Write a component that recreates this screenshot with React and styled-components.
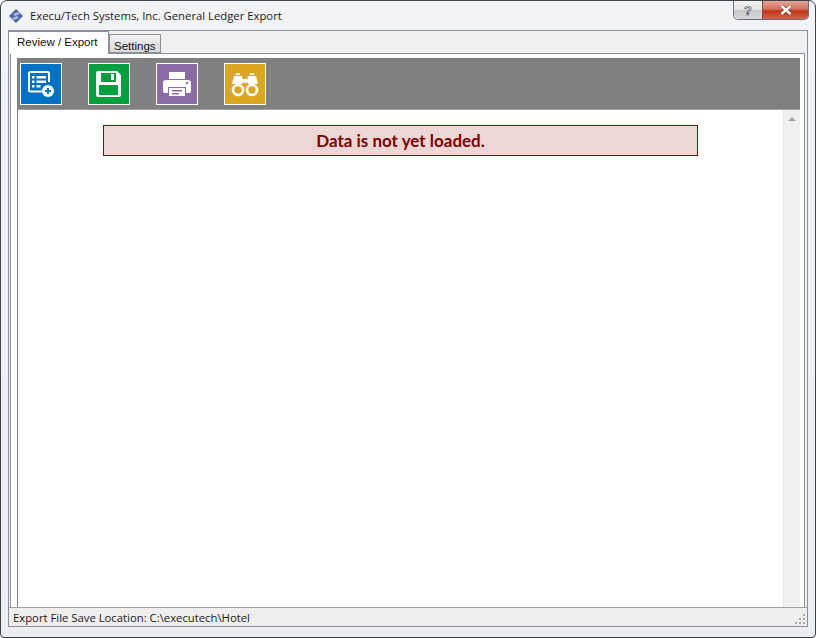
import React from 'react'
import styled, { createGlobalStyle } from 'styled-components'

const Global = createGlobalStyle`
  html, body { margin: 0; padding: 0; background: #fff; }
  * { box-sizing: border-box; }
`

const Window = styled.div`
  width: 816px;
  height: 638px;
  display: flex;
  flex-direction: column;
  padding: 0 7px 10px 7px;
  background: linear-gradient(#f1f3f5, #eceef1);
  border: 1px solid #3f4246;
  border-radius: 7px 7px 4px 4px;
  font-family: "Liberation Sans", Arial, sans-serif;
  color: #111;
`

const TitleBar = styled.div`
  height: 29px;
  flex: none;
  display: flex;
  align-items: flex-start;
`

const AppIcon = styled.svg`
  width: 16px;
  height: 16px;
  margin-top: 7px;
  flex: none;
`

const Title = styled.div`
  margin: 7px 0 0 6px;
  font-family: "Open Sans", sans-serif;
  font-size: 11.3px;
  line-height: 16px;
  color: #1a1a1a;
  white-space: nowrap;
`

const Controls = styled.div`
  margin-left: auto;
  margin-right: -1px;
  display: flex;
  height: 19px;
  width: 76px;
  border: 1px solid #6b7078;
  border-top: none;
  border-radius: 0 0 5px 5px;
  overflow: hidden;
`

const HelpButton = styled.div`
  width: 28px;
  background: linear-gradient(#f2f2f2 0, #e6e6e6 48%, #c8c8c8 52%, #d8d8d8 100%);
  display: flex;
  align-items: center;
  justify-content: center;
  font: bold 13px "Liberation Sans", sans-serif;
  color: #fff;
  -webkit-text-stroke: 0.7px #4a5060;
`

const CloseButton = styled.div`
  flex: 1;
  border-left: 1px solid #8c4638;
  background: linear-gradient(#e6a493 0, #d5705a 45%, #c0341c 55%, #d2654c 100%);
  display: flex;
  align-items: center;
  justify-content: center;
`

const Client = styled.div`
  flex: 1;
  min-height: 0;
  display: flex;
  flex-direction: column;
  background: #f0f0f0;
  border: 1px solid #8b909a;
`

const TabStrip = styled.div`
  height: 22px;
  flex: none;
  display: flex;
  align-items: flex-end;
  position: relative;
  z-index: 1;
`

const Tab = styled.div`
  height: ${p => (p.$active ? 23 : 19)}px;
  width: ${p => (p.$active ? 100 : 52)}px;
  margin-bottom: ${p => (p.$active ? -1 : 0)}px;
  padding: ${p => (p.$active ? '3px 0 0 8px' : '4px 0 0 4px')};
  font-size: 11.5px;
  line-height: 14px;
  background: ${p => (p.$active ? '#fff' : 'linear-gradient(#f2f2f2, #d9d9d9)')};
  border: 1px solid #8b909a;
  border-bottom: ${p => (p.$active ? 'none' : '1px solid #8b909a')};
  border-left: ${p => (p.$active ? 'none' : '1px solid #8b909a')};
  white-space: nowrap;
`

const TabPage = styled.div`
  flex: 1;
  min-height: 0;
  display: flex;
  flex-direction: column;
  margin: 0 2px 0 1px;
  padding: 4px 4px 0 6px;
  background: #fff;
  border: 1px solid #8b909a;
  border-bottom: none;
`

const Toolbar = styled.div`
  height: 51px;
  flex: none;
  display: flex;
  align-items: center;
  gap: 26px;
  padding-left: 3px;
  background: #808080;
`

const ToolButton = styled.div`
  width: 42px;
  height: 42px;
  background: ${p => p.$color};
  border: 1px solid #fff;
  display: flex;
  align-items: center;
  justify-content: center;
`

const Body = styled.div`
  flex: 1;
  min-height: 0;
  display: flex;
  border-left: 1px solid #808080;
  border-top: 1px solid #a0a0a0;
`

const Content = styled.div`
  flex: 1;
  padding: 15px 85px 0 85px;
`

const Banner = styled.div`
  height: 31px;
  background: #ecd6d6;
  border: 1px solid #8b0000;
  color: #800000;
  font-family: Lato, sans-serif;
  font-weight: 700;
  font-size: 17px;
  line-height: 29px;
  text-align: center;
`

const Scrollbar = styled.div`
  width: 17px;
  flex: none;
  background: #f0f0f0;
  border-left: 1px solid #e6e6e6;
  display: flex;
  justify-content: center;
  padding-top: 7px;
`

const Arrow = styled.div`
  width: 0;
  height: 0;
  border-left: 4px solid transparent;
  border-right: 4px solid transparent;
  border-bottom: 4px solid #a6a6a6;
`

const StatusBar = styled.div`
  height: 19px;
  flex: none;
  display: flex;
  align-items: center;
  justify-content: space-between;
  padding: 0 1px 0 4px;
  background: #f0eded;
  border-top: 1px solid #a0a0a0;
  font-family: "Open Sans", sans-serif;
  font-size: 11.3px;
  color: #1a1a1a;
`

const Grip = styled.svg`
  width: 11px;
  height: 11px;
  align-self: flex-end;
  margin-bottom: 1px;
`

const CloseGlyph = () => (
  <svg width="14" height="10" viewBox="0 0 14 10">
    <path d="M2.5 1 L11.5 9 M11.5 1 L2.5 9" stroke="#5a3b38" strokeWidth="3.6" />
    <path d="M2.5 1 L11.5 9 M11.5 1 L2.5 9" stroke="#fff" strokeWidth="2.4" />
  </svg>
)

const ListAddIcon = () => (
  <svg width="28" height="28" viewBox="0 0 28 28" fill="none">
    <path d="M15 21.5H3.5a1.5 1.5 0 0 1-1.5-1.5V3.5A1.5 1.5 0 0 1 3.5 2h17A1.5 1.5 0 0 1 22 3.5V12" stroke="#fff" strokeWidth="2" />
    <path d="M5 6h2.5v2.5H5zM5 10.5h2.5V13H5zM5 15h2.5v2.5H5z" fill="#fff" />
    <path d="M9.5 6h9.5v2.5H9.5zM9.5 10.5h9.5V13H9.5zM9.5 15h4v2.5h-4z" fill="#fff" />
    <circle cx="21" cy="21" r="6" fill="#fff" />
    <path d="M18 21h6M21 18v6" stroke="#0072c6" strokeWidth="2" />
  </svg>
)

const SaveIcon = () => (
  <svg width="26" height="28" viewBox="0 0 26 28">
    <path fillRule="evenodd" fill="#fff" d="M2 1h19l4 4v20a2 2 0 0 1-2 2H2a2 2 0 0 1-2-2V3a2 2 0 0 1 2-2zM5 3v8a1 1 0 0 0 1 1h13a1 1 0 0 0 1-1V3zM3 15v10h19V15z" />
    <path d="M15 4h3v6h-3z" fill="#fff" />
  </svg>
)

const PrintIcon = () => (
  <svg width="28" height="26" viewBox="0 0 28 26">
    <path fillRule="evenodd" fill="#fff" d="M6 1h16v7H6zM3 9h22a3 3 0 0 1 3 3v8a2 2 0 0 1-2 2h-3v-6H5v6H2a2 2 0 0 1-2-2v-8a3 3 0 0 1 3-3z" />
    <circle cx="24" cy="12" r="1.2" fill="#8a6ba5" />
    <path fillRule="evenodd" fill="#fff" d="M6 17h16v8H6zM9 19v1.5h10V19zM9 22v1.5h7V22z" />
  </svg>
)

const BinocularsIcon = () => (
  <svg width="28" height="26" viewBox="0 0 28 26">
    <path fill="#fff" d="M4 4h5v-2h-3zM19 2h3l2 2h-5z" />
    <path fill="#fff" d="M3 5h8l1 5-1 3H1zM17 5h8l2 8H17l-1-3z" />
    <path fill="#fff" d="M12 8h4v4h-4z" />
    <circle cx="7" cy="19" r="5" fill="none" stroke="#fff" strokeWidth="2.6" />
    <circle cx="21" cy="19" r="5" fill="none" stroke="#fff" strokeWidth="2.6" />
  </svg>
)

const tools = [
  { color: '#0072c6', icon: <ListAddIcon /> },
  { color: '#00a03e', icon: <SaveIcon /> },
  { color: '#8a6ba5', icon: <PrintIcon /> },
  { color: '#dca620', icon: <BinocularsIcon /> },
]

const App = () => (
  <>
    <Global />
    <Window>
      <TitleBar>
        <AppIcon viewBox="0 0 16 16">
          <path d="M8 1l7 7-7 7-7-7z" fill="#4a62a8" />
          <path d="M5 6l5-2 2 2-5 2zM4 10l5-2 2 2-5 2z" fill="#a9b7de" />
        </AppIcon>
        <Title>Execu/Tech Systems, Inc. General Ledger Export</Title>
        <Controls>
          <HelpButton>?</HelpButton>
          <CloseButton><CloseGlyph /></CloseButton>
        </Controls>
      </TitleBar>
      <Client>
        <TabStrip>
          <Tab $active>Review / Export</Tab>
          <Tab>Settings</Tab>
        </TabStrip>
        <TabPage>
          <Toolbar>
            {tools.map(t => (
              <ToolButton key={t.color} $color={t.color}>{t.icon}</ToolButton>
            ))}
          </Toolbar>
          <Body>
            <Content>
              <Banner>Data is not yet loaded.</Banner>
            </Content>
            <Scrollbar><Arrow /></Scrollbar>
          </Body>
        </TabPage>
        <StatusBar>
          Export File Save Location: C:\executech\Hotel
          <Grip viewBox="0 0 11 11" fill="#a8a8a8">
            <path d="M8 0h2v2H8zM4 4h2v2H4zM8 4h2v2H8zM0 8h2v2H0zM4 8h2v2H4zM8 8h2v2H8z" />
          </Grip>
        </StatusBar>
      </Client>
    </Window>
  </>
)

export default App
